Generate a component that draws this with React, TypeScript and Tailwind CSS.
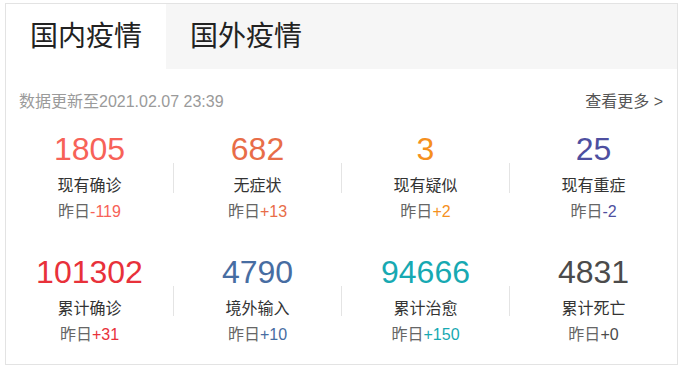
import React from "react";

type Stat = { value: string; label: string; delta: string; color: string };

const row1: Stat[] = [
  { value: "1805", label: "现有确诊", delta: "-119", color: "text-[#f76258]" },
  { value: "682", label: "无症状", delta: "+13", color: "text-[#e86d48]" },
  { value: "3", label: "现有疑似", delta: "+2", color: "text-[#f5901e]" },
  { value: "25", label: "现有重症", delta: "-2", color: "text-[#4e4fa0]" },
];

const row2: Stat[] = [
  { value: "101302", label: "累计确诊", delta: "+31", color: "text-[#e8313a]" },
  { value: "4790", label: "境外输入", delta: "+10", color: "text-[#476da2]" },
  { value: "94666", label: "累计治愈", delta: "+150", color: "text-[#17a9b2]" },
  { value: "4831", label: "累计死亡", delta: "+0", color: "text-[#4b4b4b]" },
];

function Cell({ s, deltaMt }: { s: Stat; deltaMt: string }) {
  return (
    <div className="flex-1 flex flex-col items-center">
      <div className={`text-[32px] leading-[36px] ${s.color}`}>{s.value}</div>
      <div className="mt-[7px] text-[16px] leading-[24px] text-[#333333]">{s.label}</div>
      <div className={`${deltaMt} text-[16px] leading-[24px] text-[#666666]`}>
        昨日<span className={s.color}>{s.delta}</span>
      </div>
    </div>
  );
}

function Row({ stats, deltaMt }: { stats: Stat[]; deltaMt: string }) {
  const items: React.ReactNode[] = [];
  stats.forEach((s, i) => {
    if (i > 0) items.push(<div key={`d${i}`} className="w-px h-[30px] self-center bg-[#e4e4e4]" />);
    items.push(<Cell key={i} s={s} deltaMt={deltaMt} />);
  });
  return <div className="flex">{items}</div>;
}

export default function App() {
  return (
    <div
      className="w-[688px] h-[377px] bg-white pt-[3px] pl-[5px]"
      style={{ fontFamily: '"Liberation Sans", "Noto Sans CJK SC", sans-serif' }}
    >
      <div className="w-[673px] h-[362px] border border-[#e3e3e3] flex flex-col">
        <div className="flex h-[65px] bg-[#f6f6f6]">
          <div className="w-[160px] bg-white flex items-center justify-center text-[28px] text-[#222222]">
            国内疫情
          </div>
          <div className="w-[160px] flex items-center justify-center text-[28px] text-[#222222]">
            国外疫情
          </div>
        </div>
        <div className="flex justify-between items-center pt-[21px] pl-[13px] pr-[14px] text-[16px] leading-[24px]">
          <span className="text-[#9a9a9a]">数据更新至2021.02.07 23:39</span>
          <span className="text-[#555555]">查看更多 &gt;</span>
        </div>
        <div className="mt-[17px]">
          <Row stats={row1} deltaMt="mt-[2px]" />
        </div>
        <div className="mt-[30px]">
          <Row stats={row2} deltaMt="mt-[2px]" />
        </div>
      </div>
    </div>
  );
}
